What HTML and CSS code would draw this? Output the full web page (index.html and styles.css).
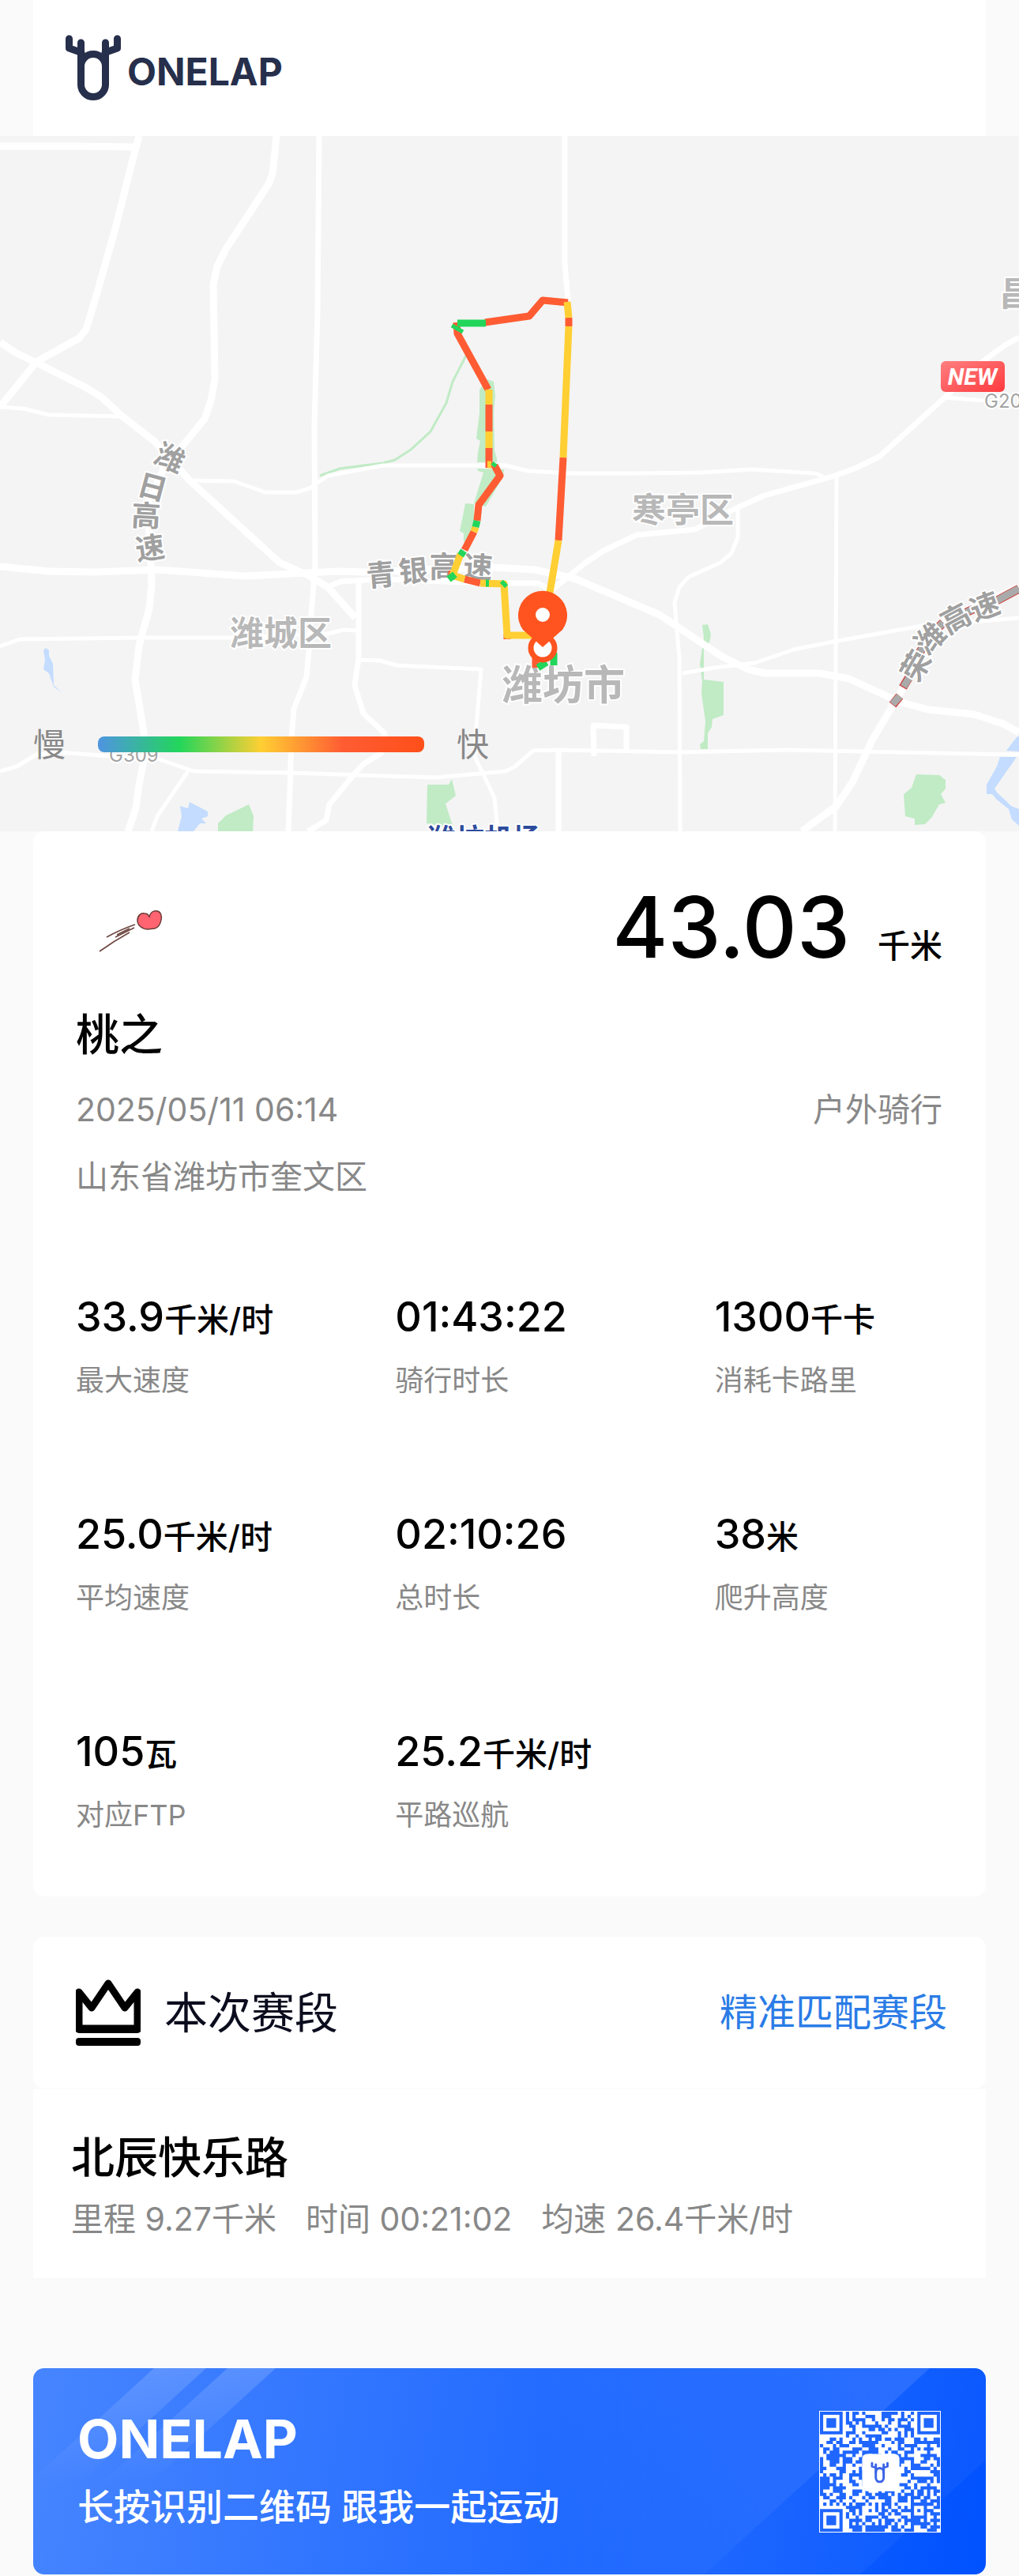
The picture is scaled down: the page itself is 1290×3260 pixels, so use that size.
FILE: index.html
```html
<!DOCTYPE html>
<html lang="zh-CN">
  <head>
    <meta charset="UTF-8" />
    <meta name="viewport" content="width=device-width, initial-scale=1.0" />
    <title>ONELAP 骑行记录</title>
    <link rel="stylesheet" href="styles.css">
  </head>
  <body>
    <header class="top-bar">
      <svg class="logo" viewBox="83 42 70 84" aria-hidden="true">
        <g fill="none" stroke="#262f4b" stroke-width="9" stroke-linecap="round">
          <rect x="102.5" y="66.5" width="31" height="54" rx="15.5" />
          <path d="M102.5 52V84M133.5 52V84" />
          <path d="M87.5 47V59L103 64.500M148.500 47V59L133 64.500" stroke-linejoin="round" />
        </g>
      </svg>
      <h1 class="brand">ONELAP</h1>
    </header>

    <section class="map">
      <svg class="map-canvas" viewBox="0 172 1290 880">
        <!-- parks and water -->
        <g fill="#c0ebc5">
          <path d="M617 480L625 483L627 500L625 523L626 570L629 580V585H604L605 573L608 558L603 555L607 523V493Z" />
          <path d="M604 593L638 594L637 603L615 641L600 637L612 598L605 596Z" />
          <path d="M589 637L600 638V670L587 687V675L582 672L586 653Z" />
          <path d="M889 791L896 790L900 803L898 813L891 817V860L916 863V905L902 910L901 920L896 928V948H887L886 942L891 938L893 913L888 877L889 862L886 840L891 807Z" />
          <path d="M1160 980L1189 981L1197 987V998L1191 1005L1197 1016L1189 1018L1179 1035L1171 1043L1158 1044V1036L1146 1033L1144 1005L1154 997Z" />
          <path d="M541 993H568L572 986L577 1007L564 1017L574 1048L540 1042Z" />
          <path d="M315 1018L321 1033L320 1052H276V1042L286 1032Z" />
        </g>
        <path d="M590 450L573 483L565 510L545 546L520 569L500 582L485 586L430 593L405 602" fill="none" stroke="#c0ebc5" stroke-width="3" />
        <g fill="#c3dcff">
          <path d="M240 1015L263 1027V1033L255 1036L261 1042L253 1042L245 1052H225L230 1033L228 1020L238 1023Z" />
          <path d="M58 820L62 823V830L67 840L68 867L79 877L68 869L62 852L55 847L57 835L55 823Z" />
          <path d="M1287 933L1290 932V951L1274 950Z" />
          <path d="M1266 958H1287L1259 998L1262 1003L1273 1013L1280 1020L1290 1024V1045L1281 1037L1277 1024L1262 1012L1256 1005H1249V993L1262 970Z" />
        </g>

        <!-- roads -->
        <g fill="none" stroke="#fff" stroke-linejoin="round">
          <g stroke-width="9">
            <path d="M0 185H95L170 186" />
            <path d="M176 172L166 210L145 293L124 367L109 417L100 428L46 458L0 515" />
            <path d="M0 433L21 447L46 459L108 490L129 503L155 527L195 558L240 608L354 712L390 728L415 743L450 782" />
            <path d="M350 172L345 220L340 233L286 315L275 337L270 360L272 480L267 507L259 530L228 568L207 593L187 637L191 713L192 740L189 770L176 817L171 860L182 927L184 953L176 993L172 1023L162 1052" />
            <path d="M0 717L62 723L120 724L199 721L311 729L427 723L464 724L622 718L677 721L727 732L835 778L914 831L947 847L968 852H1038L1075 859L1138 888L1175 898L1233 904L1270 916L1290 927" />
            <path d="M1015 1052L1059 1020L1079 990L1104 937L1133 888L1148 863L1167 823L1191 790L1220 773L1290 743" />
          </g>
          <g stroke-width="7">
            <path d="M404 172L402 393L398 540L399 717L394 777L392 813L388 857L372 897L369 933L367 1000L365 1052" />
            <path d="M415 743L431 736L481 733L622 738H681L698 747L740 713L764 697L806 677L880 670L934 642L968 627L1057 602L1084 592L1113 578L1196 503L1237 463L1254 450L1272 437L1290 427" />
            <path d="M454 733V833L449 867L460 903L487 928L483 953L460 967L448 980L417 1018L413 1038L390 1052" />
            <path d="M715 172V333L719 380M707 949V1052M752 957L751 918L793 920V952" />
          </g>
          <g stroke-width="5">
            <path d="M0 515L29 517L62 525L155 527M240 608L296 609L336 623H375L392 618L415 602L485 589H640L669 596L723 599H806L889 598L951 594L1032 599L1042 603" />
            <path d="M1196 503L1245 507M1059 600L1057 1052" />
            <path d="M934 642V680L926 700L912 712L872 730L860 743L854 763L860 833L861 1052" />
            <path d="M864 852L905 845L955 839L1005 822L1055 812L1167 792L1290 782" />
            <path d="M0 976L21 970L46 955L75 952L141 957L199 960L245 976L369 978L551 984L640 976L652 970L675 950L706 949L860 952L997 949L1290 955" />
            <path d="M0 818L25 809L178 807H290L415 802L435 797L452 798" />
            <path d="M454 835L481 836L502 842L609 847L603 920L601 958L612 980L626 1010L630 1052M238 976L199 1033L192 1052" />
          </g>
        </g>
        <path d="M1130 892L1139 881M1143 870L1152 855M1164 826L1170 817M1188 794L1194 788M1223 775L1232 771M1262 760L1290 745" fill="none" stroke="#cf4a45" stroke-width="11" />
        <path d="M1130 891L1139 881M1144 869L1152 856M1164 826L1170 817M1188 794L1194 788M1223 775L1232 771M1262 760L1290 745" fill="none" stroke="#aaa" stroke-width="9" />

        <!-- place names -->
        <g class="map-text">
          <text class="district" x="291" y="817">潍城区</text>
          <text class="district" x="800" y="661">寒亭区</text>
          <text class="district" x="1265" y="387">昌</text>
          <text class="city" x="635" y="886">潍坊市</text>
          <g class="highway" text-anchor="middle">
            <text transform="translate(215 580) rotate(25)" y="13">潍</text>
            <text transform="translate(193 617) rotate(15)" y="13">日</text>
            <text transform="translate(185 653) rotate(3)" y="13">高</text>
            <text transform="translate(190 694) rotate(-8)" y="13">速</text>
            <text transform="translate(482 728) rotate(-5)" y="13">青</text>
            <text transform="translate(523 723) rotate(-5)" y="13">银</text>
            <text transform="translate(562 718)" y="13">高</text>
            <text transform="translate(605 718) rotate(4)" y="13">速</text>
            <text transform="translate(1160 843) rotate(-60)" y="13">荣</text>
            <text transform="translate(1178 808) rotate(-45)" y="13">潍</text>
            <text transform="translate(1210 783) rotate(-28)" y="13">高</text>
            <text transform="translate(1247 768) rotate(-20)" y="13">速</text>
          </g>
          <text class="road-no" x="138" y="964">G309</text>
          <text class="road-no" x="1246" y="516">G20</text>
          <text class="airport" x="541" y="1075">潍坊机场</text>
        </g>

        <!-- new tag -->
        <linearGradient id="newFill" x1="0" y1="0" x2="1" y2="1">
          <stop offset="0" stop-color="#ff7f80" />
          <stop offset="1" stop-color="#ff3b3e" />
        </linearGradient>
        <rect x="1191" y="457" width="81" height="39" rx="6" fill="url(#newFill)" />
        <text class="new-tag" x="1231" y="487" text-anchor="middle">NEW</text>

        <!-- track -->
        <g fill="none" stroke-width="9" stroke-linejoin="round">
          <g stroke="#ff5c33">
            <path d="M614 408L670 400L687 380L719 383M720 402V413M713 579L707 684" />
            <path d="M578 408L579 422L618 493M619 512V546M619 567V592M626 589L633 602L606 639L604 659M600 673L588 696M572 722V729M588 733L608 738M642 802V809M678 830V845" />
          </g>
          <g stroke="#ffcf33">
            <path d="M718 382L720 402M720 413L713 579M707 684L696 750" />
            <path d="M619 493V512M619 546V567M602 667L600 673M583 701L573 728L588 733M608 738L638 739L642 804H675M617 588H622" />
          </g>
          <g stroke="#22d65b">
            <path d="M579 409H615M604 659L602 667M587 697L583 703M568 733L576 727M615 738H619M636 741L640 737M681 845L692 838M701 826V842" />
          </g>
          <path d="M572 412L586 420M623 586L628 590" stroke="#22d65b" stroke-width="5" />
        </g>
        <circle cx="687" cy="820" r="15" fill="#fff" stroke="#ff541f" stroke-width="7" />
        <path d="M687 819L662 797A31 31 0 1 1 712 797Z" fill="#ff541f" />
        <circle cx="687" cy="778" r="9" fill="#fff" />
      </svg>
      <div class="legend">
        <span>慢</span>
        <span class="legend-bar"></span>
        <span>快</span>
      </div>
    </section>

    <main>
      <section class="card ride">
        <div class="ride-head">
          <svg class="avatar" viewBox="97 1119 108 108" role="img" aria-label="头像">
            <path d="M188 1176C181 1176 175 1171 175 1165C175 1159 179 1155 184 1156C187 1156 189 1158 190 1160C191 1155 195 1152 200 1153C205 1154 206 1160 205 1164C204 1170 201 1174 197 1175Z" fill="#ff6470" stroke="#6b3a36" stroke-width="1.500" />
            <path d="M172 1170Q152 1177 136 1186M171 1174L147 1186M165 1175L149 1183M165 1180Q145 1191 127 1204" fill="none" stroke="#6e4741" stroke-width="1.600" />
          </svg>
          <p class="distance">43.03<span class="distance-unit">千米</span></p>
        </div>
        <h2 class="rider">桃之</h2>
        <div class="ride-info">
          <span>2025/05/11 06:14</span>
          <span>户外骑行</span>
        </div>
        <p class="place">山东省潍坊市奎文区</p>

        <dl class="stats">
          <div class="stat">
            <dd>33.9<span class="unit">千米/时</span></dd>
            <dt>最大速度</dt>
          </div>
          <div class="stat">
            <dd>01:43:22</dd>
            <dt>骑行时长</dt>
          </div>
          <div class="stat">
            <dd>1300<span class="unit">千卡</span></dd>
            <dt>消耗卡路里</dt>
          </div>
          <div class="stat">
            <dd>25.0<span class="unit">千米/时</span></dd>
            <dt>平均速度</dt>
          </div>
          <div class="stat">
            <dd>02:10:26</dd>
            <dt>总时长</dt>
          </div>
          <div class="stat">
            <dd>38<span class="unit">米</span></dd>
            <dt>爬升高度</dt>
          </div>
          <div class="stat">
            <dd>105<span class="unit">瓦</span></dd>
            <dt>对应FTP</dt>
          </div>
          <div class="stat">
            <dd>25.2<span class="unit">千米/时</span></dd>
            <dt>平路巡航</dt>
          </div>
        </dl>
      </section>

      <section class="card segment-head">
        <svg class="crown" viewBox="0 0 82 84" aria-hidden="true">
          <path d="M4 62V16L20 36L41 5L62 36L78 16V62Z" fill="none" stroke="#000" stroke-width="9" stroke-linejoin="round" />
          <path d="M4 63H78" stroke="#000" stroke-width="10" stroke-linecap="round" />
          <rect y="74" width="82" height="10" rx="4" />
        </svg>
        <h2>本次赛段</h2>
        <a href="#segment">精准匹配赛段</a>
      </section>
      <section class="segment" id="segment">
        <h3>北辰快乐路</h3>
        <p class="segment-meta">
          <span>里程 9.27千米</span>
          <span>时间 00:21:02</span>
          <span>均速 26.4千米/时</span>
        </p>
      </section>
    </main>

    <footer class="banner">
      <svg class="banner-shine" viewBox="0 0 1206 261" preserveAspectRatio="none" aria-hidden="true">
        <linearGradient id="fade" x1="0" y1="0" x2="0" y2="1">
          <stop offset="0" stop-color="#fff" stop-opacity=".16" />
          <stop offset="1" stop-color="#fff" stop-opacity="0" />
        </linearGradient>
        <linearGradient id="fadeLeft" x1="1" y1="0" x2="0" y2="0">
          <stop offset="0" stop-color="#fff" stop-opacity=".14" />
          <stop offset="1" stop-color="#fff" stop-opacity="0" />
        </linearGradient>
        <path d="M153 0H219L59 146H-7Z" fill="url(#fade)" />
        <path d="M246 0H307L147 146H86Z" fill="url(#fade)" />
        <path d="M1135 0L850 261H640V0Z" fill="url(#fadeLeft)" />
        <path d="M1206 0V116L1047 261H850L1135 0Z" fill="#fff" fill-opacity=".04" />
      </svg>
      <div class="banner-text">
        <p class="banner-brand">ONELAP</p>
        <p class="banner-tip">长按识别二维码 跟我一起运动</p>
      </div>
      <svg class="qr" viewBox="0 0 37 37" role="img" aria-label="二维码">
        <rect width="37" height="37" fill="#fff" />
        <path id="qrCells" fill="#1f66ff" />
        <rect x="13" y="13" width="11.500" height="11.500" rx="1.500" fill="#fff" />
        <g transform="translate(15.700 15.500) scale(.078) translate(-83 -42)" fill="none" stroke="#3a63e8" stroke-width="9" stroke-linecap="round">
          <rect x="102.500" y="66.500" width="31" height="54" rx="15.500" />
          <path d="M102.500 52V84M133.500 52V84M87.500 47V59L103 64.500M148.500 47V59L133 64.500" />
        </g>
      </svg>
    </footer>

    <script>
      const size = 37;
      let seed = 20250511;

      function random() {
        seed = (seed * 1103515245 + 12345) % 2147483648;
        return seed / 2147483648;
      }

      // true / false inside a finder or alignment square, null elsewhere
      function square(x, y, left, top, width) {
        const dx = x - left;
        const dy = y - top;
        if (dx < -1 || dy < -1 || dx > width || dy > width) return null;
        const ring = Math.min(dx, dy, width - 1 - dx, width - 1 - dy);
        return ring === 0 || ring >= 2;
      }

      let d = '';
      for (let y = 0; y < size; y++) {
        for (let x = 0; x < size; x++) {
          const fill = random() < 0.54;
          const cell =
            square(x, y, 0, 0, 7) ??
            square(x, y, 30, 0, 7) ??
            square(x, y, 0, 30, 7) ??
            (x > 27 && x < 33 && y > 27 && y < 33
              ? square(x, y, 28, 28, 5)
              : fill);
          if (cell) d += `M${x} ${y}h1v1h-1z`;
        }
      }
      document.getElementById('qrCells').setAttribute('d', d);
    </script>
  </body>
</html>
```
FILE: styles.css
```css
* {
  box-sizing: border-box;
}

body {
  margin: 0;
  background: #fafafa;
  color: #000;
  font-family: Inter, "Noto Sans CJK SC", sans-serif;
}

h1,
h2,
h3,
p,
dl,
dd {
  margin: 0;
}

h2,
h3 {
  font-size: 55px;
  line-height: 76px;
  font-weight: 500;
}

.top-bar {
  display: flex;
  align-items: center;
  height: 172px;
  margin: 0 42px;
  padding: 0 41px;
  background: #fff;
}

.logo {
  width: 70px;
  height: 84px;
}

.brand {
  margin: 10px 0 0 8px;
  font-size: 48px;
  line-height: 56px;
  font-weight: 700;
  color: #262f4b;
}

/* map */
.map {
  position: relative;
  background: #f4f4f4;
}

.map-canvas {
  display: block;
  width: 100%;
}

.map-text {
  font-weight: 700;
  stroke: #fff;
  stroke-width: 4px;
  stroke-linejoin: round;
  paint-order: stroke;
}

.district {
  font-size: 43px;
  fill: #b8b8b8;
}

.city {
  font-size: 52px;
  fill: #b8b8b8;
}

.highway {
  font-size: 37px;
  fill: #a0a0a0;
}

.road-no {
  font-size: 24px;
  font-weight: 400;
  fill: #a3a3a3;
}

.airport {
  font-size: 36px;
  fill: #2d4b9c;
}

.new-tag {
  font-family: Roboto, sans-serif;
  font-size: 30px;
  font-weight: 700;
  font-style: italic;
  fill: #fff;
}

.legend {
  position: absolute;
  left: 42px;
  bottom: 80px;
  display: flex;
  align-items: center;
  font-size: 41px;
  line-height: 60px;
  color: #888;
}

.legend-bar {
  width: 413px;
  height: 20px;
  margin: 0 41px;
  border-radius: 8px;
  background: linear-gradient(90deg, #4f94e2, #22d65b 25%, #ffcf33 50%, #ff5c33 75%, #ff4f1a);
}

/* ride summary */
.card {
  margin: 0 42px;
  background: #fff;
  border-radius: 14px;
}

.ride {
  padding: 67px 55px 78px 54px;
}

.ride-head {
  display: flex;
  justify-content: space-between;
  align-items: center;
}

.avatar {
  width: 108px;
  height: 108px;
  overflow: visible;
}

.distance {
  font-size: 107px;
  line-height: 108px;
  font-weight: 500;
}

.distance-unit {
  margin-left: 35px;
  font-size: 41px;
  line-height: 1;
}

.rider {
  margin-top: 44px;
}

.ride-info {
  display: flex;
  justify-content: space-between;
  margin-top: 27px;
}

.ride-info,
.place,
.segment-meta {
  font-size: 41px;
  line-height: 60px;
  color: #888;
}

.place {
  margin-top: 25px;
}

.stats {
  display: grid;
  grid-template-columns: repeat(3, 1fr);
  gap: 132px 116px;
  margin-top: 110px;
}

.stat dd {
  font-size: 52px;
  line-height: 76px;
  font-weight: 500;
  white-space: nowrap;
}

.unit {
  font-size: 41px;
  line-height: 1;
}

.stat dt {
  margin-top: 17px;
  font-size: 36px;
  line-height: 50px;
  color: #888;
}

/* segments */
.segment-head {
  display: flex;
  align-items: center;
  height: 192px;
  margin-top: 51px;
  padding: 0 49px 0 54px;
}

.crown {
  width: 82px;
  height: 84px;
}

.segment-head h2 {
  margin-left: 30px;
  font-weight: 400;
  color: #0b0c1d;
}

.segment-head a {
  margin-left: auto;
  font-size: 48px;
  line-height: 60px;
  color: #2b7ce6;
  text-decoration: none;
}

.segment {
  margin: 1px 42px 0;
  padding: 48px 48px 45px;
  background: #fff;
}

.segment-meta {
  display: flex;
  gap: 37px;
  margin-top: 10px;
}

/* download banner */
.banner {
  position: relative;
  display: flex;
  justify-content: space-between;
  align-items: center;
  height: 261px;
  margin: 114px 42px 2px;
  padding: 0 57px 0 56px;
  border-radius: 14px;
  overflow: hidden;
  color: #fff;
  background: linear-gradient(100deg, #4785ff, #256dff 50%, #0052ff);
}

.banner-shine {
  position: absolute;
  inset: 0;
  width: 100%;
  height: 100%;
}

.banner-text,
.qr {
  position: relative;
}

.banner-text {
  padding-bottom: 6px;
}

.banner-brand {
  font-size: 68px;
  line-height: 76px;
  font-weight: 700;
}

.banner-tip {
  margin-top: 18px;
  font-size: 46px;
  line-height: 60px;
  font-weight: 500;
}

.qr {
  width: 154px;
  height: 154px;
  border: 1px solid #fff;
}
```
